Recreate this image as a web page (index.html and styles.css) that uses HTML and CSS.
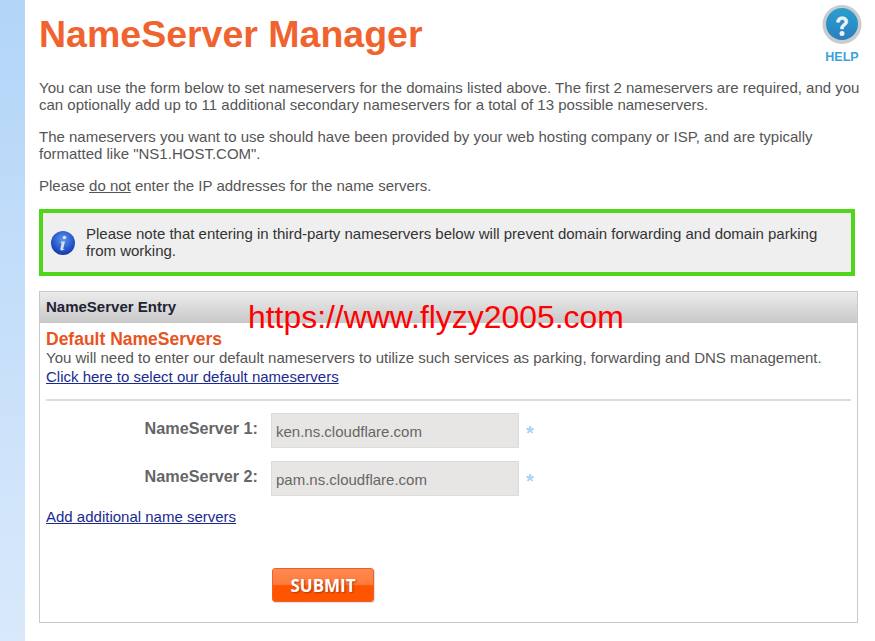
FILE: index.html
```html
<!DOCTYPE html>
<html lang="en">
<head>
<meta charset="utf-8">
<title>NameServer Manager</title>
<link rel="stylesheet" href="styles.css">
</head>
<body>
<div class="page">
  <aside class="rail"></aside>
  <main class="main">
    <header class="head">
      <h1 class="title">NameServer Manager</h1>
      <a class="help">
        <svg class="help-icon" width="40" height="40" viewBox="0 0 40 40">
          <defs>
            <linearGradient id="hb" x1="0" y1="0" x2="0" y2="1"><stop offset="0" stop-color="#2b9fd0"/><stop offset="1" stop-color="#2a7fbf"/></linearGradient>
          </defs>
          <circle cx="20" cy="19.500" r="19.500" fill="#c9cbcc"/>
          <circle cx="20" cy="19" r="16" fill="url(#hb)"/>
          <path d="M14.500 17.200c0-3.500 2.500-5.500 5.700-5.500 3.300 0 5.600 1.900 5.600 4.800 0 2.200-1.200 3.300-2.600 4.400-1.300 1-1.700 1.500-1.700 3h-3c0-2.500.8-3.500 2.200-4.700 1.200-1 2-1.600 2-2.700 0-1.200-1-2-2.400-2-1.500 0-2.500.9-2.600 2.700z" fill="#eef2f5" stroke="#eef2f5" stroke-width="0.600"/>
          <circle cx="20" cy="28.500" r="2.500" fill="#eef2f5"/>
        </svg>
        <span class="help-text">HELP</span>
      </a>
    </header>
    <p class="para">You can use the form below to set nameservers for the domains listed above. The first 2 nameservers are required, and you can optionally add up to 11 additional secondary nameservers for a total of 13 possible nameservers.</p>
    <p class="para">The nameservers you want to use should have been provided by your web hosting company or ISP, and are typically formatted like "NS1.HOST.COM".</p>
    <p class="para">Please <u>do not</u> enter the IP addresses for the name servers.</p>
    <div class="notice">
      <svg class="notice-icon" width="26" height="26" viewBox="0 0 26 26">
        <defs>
          <radialGradient id="ib" cx="0.5" cy="0.35" r="0.7"><stop offset="0" stop-color="#5f96ea"/><stop offset="0.7" stop-color="#1f4fc4"/><stop offset="1" stop-color="#16338f"/></radialGradient>
        </defs>
        <circle cx="13" cy="13" r="12" fill="url(#ib)"/>
        <circle cx="14.500" cy="7.500" r="1.800" fill="#d5e0f5"/>
        <path d="M11 11.500h4l-1.800 7.200c-.1.500.3.600 1.300.2l-.2.900c-2.400 1-4.300.8-4-.7l1.400-6.200-1 .1z" fill="#d5e0f5"/>
      </svg>
      <p class="notice-text">Please note that entering in third-party nameservers below will prevent domain forwarding and domain parking from working.</p>
    </div>
    <section class="panel">
      <div class="panel-head">NameServer Entry</div>
      <div class="panel-body">
        <h2 class="sub">Default NameServers</h2>
        <p class="sub-text">You will need to enter our default nameservers to utilize such services as parking, forwarding and DNS management.</p>
        <a class="link first" href="#">Click here to select our default nameservers</a>
        <hr class="rule">
        <div class="field">
          <label class="field-label">NameServer 1:</label>
          <input class="field-input" type="text" value="ken.ns.cloudflare.com">
          <span class="req">*</span>
        </div>
        <div class="field">
          <label class="field-label">NameServer 2:</label>
          <input class="field-input" type="text" value="pam.ns.cloudflare.com">
          <span class="req">*</span>
        </div>
        <a class="link add" href="#">Add additional name servers</a>
        <div class="submit-row"><button class="submit" type="button">SUBMIT</button></div>
      </div>
    </section>
    <div class="watermark">https://www.flyzy2005.com</div>
  </main>
</div>
</body>
</html>
```
FILE: styles.css
```css
* { box-sizing: border-box; }
html, body { margin: 0; padding: 0; height: 100%; background: #fff; overflow: hidden; }
body { font-family: "Liberation Sans", Arial, sans-serif; font-size: 15px; color: #555; }
.page { display: flex; min-height: 641px; }
.rail { width: 25px; flex: none; background: linear-gradient(#b2d5f8, #d9e9fb); }
.main { position: relative; flex: 1; padding: 0 16px 0 14px; }
.head { display: flex; justify-content: space-between; height: 79px; }
.title { margin: 14px 0 0; font-size: 37.500px; line-height: 41px; font-weight: bold; color: #f0632f; }
.help { display: flex; flex-direction: column; align-items: center; width: 40px; margin: 5px -3px 0 0; }
.help-icon { display: block; flex: none; }
.help-text { margin-top: 6px; font-size: 12.500px; line-height: 13px; font-weight: bold; color: #3ba3dc; }
.para { margin: 0 -4px 15px 0; line-height: 17px; }
.notice { display: flex; align-items: center; width: 816px; height: 67px; padding: 0 20px 2px 7px; background: #efefef; border: 4px solid #4fd61b; }
.notice-icon { flex: none; margin: 2px 10px 0 0; }
.notice-text { margin: 0; line-height: 17px; color: #333; }
.panel { width: 819px; height: 332px; margin-top: 15px; border: 1px solid #c8c8c8; }
.panel-head { height: 31px; padding-left: 6px; line-height: 30px; font-weight: bold; color: #222233; background: linear-gradient(#ececec, #c8c8c8); }
.panel-body { padding: 6px 6px 0; }
.sub { margin: 0; font-size: 17.500px; line-height: 20px; font-weight: bold; color: #e8541e; }
.sub-text { margin: 0; line-height: 18px; }
.link { display: block; line-height: 17px; color: #1a2a90; text-decoration: underline; }
.first { margin-top: 1px; }
.add { margin-top: -1px; }
.rule { height: 0; margin: 14px 0 12px; border: 0; border-top: 2px solid #ddd; }
.field { display: flex; align-items: center; height: 35px; margin-bottom: 13px; }
.field-label { position: relative; bottom: 2px; width: 212px; text-align: right; font-weight: bold; font-size: 16.200px; color: #666; }
.field-input { width: 248px; height: 35px; margin-left: 13px; padding: 1px 4px 0; background: #e8e6e5; border: 1px solid #dedcdb; font: 15px "Liberation Sans", Arial, sans-serif; color: #666; }
.req { width: 10px; margin-left: 7px; padding-top: 4px; color: #a9d2ef; font-size: 20px; font-weight: bold; line-height: 20px; }
.submit-row { padding: 43px 0 0 226px; }
.submit { display: block; width: 102px; height: 34px; padding: 0; border: 1px solid #f0602a; border-radius: 3px; background: linear-gradient(#ff8a52 0%, #ff7a3c 48%, #ff5500 52%, #ff5500 100%); box-shadow: 1px 1px 1px #ddd; color: #fff; font: bold 17px "Open Sans", "Liberation Sans", sans-serif; text-shadow: 1px 1px 2px #a83a10; }
.watermark { position: absolute; left: 223px; top: 299px; font-size: 31.900px; line-height: 37px; color: #f00; white-space: nowrap; }
```
